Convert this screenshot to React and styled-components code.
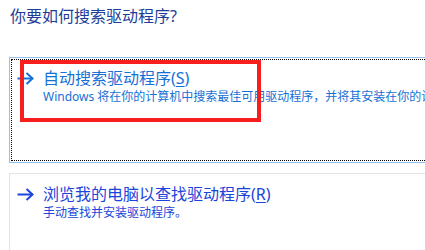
import React from "react";
import styled, { createGlobalStyle } from "styled-components";

const GlobalStyle = createGlobalStyle`
  html, body {
    margin: 0;
    padding: 0;
    background: #ffffff;
    overflow: hidden;
  }

  body {
    font-family: "Noto Sans", "Noto Sans CJK SC", sans-serif;
  }
`;

const Page = styled.div`
  width: 425px;
  height: 250px;
  overflow: hidden;
`;

const Heading = styled.div`
  margin: 5px 0 30px 10px;
  font-size: 16px;
  line-height: 22px;
  color: #1d3d97;
  white-space: nowrap;
`;

const Card = styled.div`
  position: relative;
  box-sizing: border-box;
  width: 440px;
  height: ${(p) => p.$height}px;
  margin: ${(p) => p.$top}px 0 0 9px;
  padding: 10px 0 0 7px;
  background: #ffffff;
  border: 1px solid ${(p) => (p.$active ? "#93c3ec" : "#e4e4e4")};
  outline: ${(p) => (p.$active ? "1px dotted #000000" : "none")};
  outline-offset: -3px;
`;

const Link = styled.div`
  display: flex;
  column-gap: 9px;
  color: ${(p) => p.$color};
`;

const ArrowBox = styled.div`
  display: flex;
  align-items: center;
  height: 21px;
  flex-shrink: 0;
`;

const TextColumn = styled.div`
  display: flex;
  flex-direction: column;
  min-width: 0;
`;

const Title = styled.div`
  font-size: 16px;
  line-height: 21px;
  white-space: nowrap;

  u {
    text-decoration-thickness: 1px;
    text-underline-offset: 2px;
  }
`;

const Desc = styled.div`
  font-size: 12px;
  line-height: 16px;
  white-space: nowrap;
  overflow: hidden;
`;

const Marker = styled.div`
  position: absolute;
  left: 10px;
  top: 2px;
  width: 241px;
  height: 62px;
  box-sizing: border-box;
  border: 4px solid #f81e1e;
  pointer-events: none;
`;

function Arrow() {
  return (
    <svg width="17" height="13" viewBox="0 0 17 13" fill="none">
      <path d="M0.5 6.5H15.5" stroke="currentColor" strokeWidth="2" />
      <path d="M9.5 1L15.5 6.5L9.5 12" stroke="currentColor" strokeWidth="2" />
    </svg>
  );
}

export default function App() {
  return (
    <Page>
      <GlobalStyle />
      <Heading>你要如何搜索驱动程序?</Heading>

      <Card $active $top={0} $height={106}>
        <Link $color="#1670d6">
          <ArrowBox>
            <Arrow />
          </ArrowBox>
          <TextColumn>
            <Title>
              自动搜索驱动程序(<u>S</u>)
            </Title>
            <Desc>Windows 将在你的计算机中搜索最佳可用驱动程序，并将其安装在你的设备上。</Desc>
          </TextColumn>
        </Link>
        <Marker />
      </Card>

      <Card $top={10} $height={120}>
        <Link $color="#1b45da">
          <ArrowBox>
            <Arrow />
          </ArrowBox>
          <TextColumn>
            <Title>
              浏览我的电脑以查找驱动程序(<u>R</u>)
            </Title>
            <Desc>手动查找并安装驱动程序。</Desc>
          </TextColumn>
        </Link>
      </Card>
    </Page>
  );
}
